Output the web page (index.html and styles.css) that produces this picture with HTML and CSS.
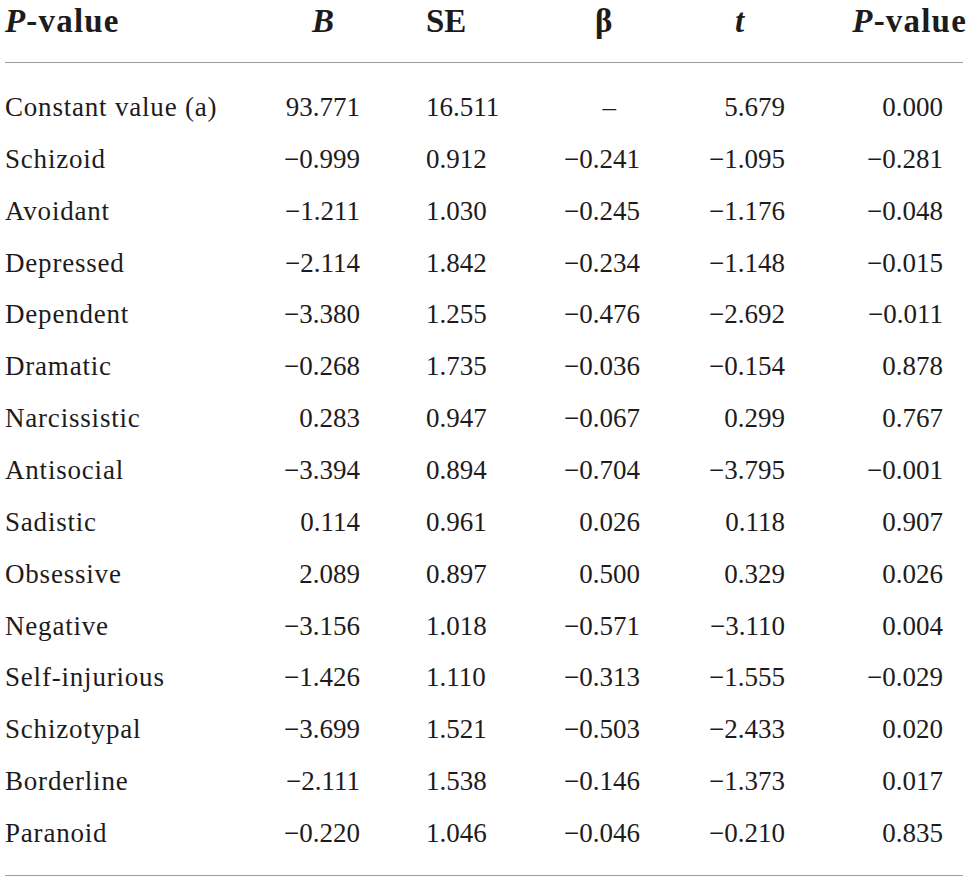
FILE: index.html
```html
<!DOCTYPE html>
<html lang="en">
<head>
<meta charset="utf-8">
<title>Regression table</title>
<link rel="stylesheet" href="styles.css">
</head>
<body>
<div class="table">
  <div class="head row">
    <div class="c1"><span class="pv"><i>P</i>-value</span></div>
    <div class="c2 h2"><i>B</i></div>
    <div class="c3">SE</div>
    <div class="c4 h4">β</div>
    <div class="c5 h5"><i>t</i></div>
    <div class="c6 h6"><span class="pv"><i>P</i>-value</span></div>
  </div>
  <div class="body">
    <div class="row"><div class="c1">Constant value (a)</div><div class="c2">93.771</div><div class="c3">16.511</div><div class="c4 dash">–</div><div class="c5">5.679</div><div class="c6">0.000</div></div>
    <div class="row"><div class="c1">Schizoid</div><div class="c2">−0.999</div><div class="c3">0.912</div><div class="c4">−0.241</div><div class="c5">−1.095</div><div class="c6">−0.281</div></div>
    <div class="row"><div class="c1">Avoidant</div><div class="c2">−1.211</div><div class="c3">1.030</div><div class="c4">−0.245</div><div class="c5">−1.176</div><div class="c6">−0.048</div></div>
    <div class="row"><div class="c1">Depressed</div><div class="c2">−2.114</div><div class="c3">1.842</div><div class="c4">−0.234</div><div class="c5">−1.148</div><div class="c6">−0.015</div></div>
    <div class="row"><div class="c1">Dependent</div><div class="c2">−3.380</div><div class="c3">1.255</div><div class="c4">−0.476</div><div class="c5">−2.692</div><div class="c6">−0.011</div></div>
    <div class="row"><div class="c1">Dramatic</div><div class="c2">−0.268</div><div class="c3">1.735</div><div class="c4">−0.036</div><div class="c5">−0.154</div><div class="c6">0.878</div></div>
    <div class="row"><div class="c1">Narcissistic</div><div class="c2">0.283</div><div class="c3">0.947</div><div class="c4">−0.067</div><div class="c5">0.299</div><div class="c6">0.767</div></div>
    <div class="row"><div class="c1">Antisocial</div><div class="c2">−3.394</div><div class="c3">0.894</div><div class="c4">−0.704</div><div class="c5">−3.795</div><div class="c6">−0.001</div></div>
    <div class="row"><div class="c1">Sadistic</div><div class="c2">0.114</div><div class="c3">0.961</div><div class="c4">0.026</div><div class="c5">0.118</div><div class="c6">0.907</div></div>
    <div class="row"><div class="c1">Obsessive</div><div class="c2">2.089</div><div class="c3">0.897</div><div class="c4">0.500</div><div class="c5">0.329</div><div class="c6">0.026</div></div>
    <div class="row"><div class="c1">Negative</div><div class="c2">−3.156</div><div class="c3">1.018</div><div class="c4">−0.571</div><div class="c5">−3.110</div><div class="c6">0.004</div></div>
    <div class="row"><div class="c1">Self-injurious</div><div class="c2">−1.426</div><div class="c3">1.110</div><div class="c4">−0.313</div><div class="c5">−1.555</div><div class="c6">−0.029</div></div>
    <div class="row"><div class="c1">Schizotypal</div><div class="c2">−3.699</div><div class="c3">1.521</div><div class="c4">−0.503</div><div class="c5">−2.433</div><div class="c6">0.020</div></div>
    <div class="row"><div class="c1">Borderline</div><div class="c2">−2.111</div><div class="c3">1.538</div><div class="c4">−0.146</div><div class="c5">−1.373</div><div class="c6">0.017</div></div>
    <div class="row"><div class="c1">Paranoid</div><div class="c2">−0.220</div><div class="c3">1.046</div><div class="c4">−0.046</div><div class="c5">−0.210</div><div class="c6">0.835</div></div>
  </div>
</div>
</body>
</html>
```

FILE: styles.css
```css
html, body {
  margin: 0;
  padding: 0;
  background: #ffffff;
}

body {
  font-family: "Liberation Serif", "Times New Roman", serif;
  color: #1e1b1c;
}

.table {
  margin-left: 5px;
  width: 958px;
}

.row {
  display: grid;
  grid-template-columns: 265px 130px 120px 140px 140px 163px;
  white-space: nowrap;
}

.head {
  font-size: 33px;
  font-weight: bold;
  line-height: 40px;
  padding-top: 1px;
  padding-bottom: 21px;
  border-bottom: 1px solid #9d9d9d;
}

.pv {
  letter-spacing: 1.2px;
}

.body {
  font-size: 27px;
  line-height: 51.86px;
  padding-top: 19px;
  padding-bottom: 15px;
  border-bottom: 1px solid #9d9d9d;
}

.body .c1 {
  letter-spacing: 0.8px;
}

.c1 { text-align: left; }
.c2 { text-align: right; padding-right: 40px; }
.c3 { text-align: left; padding-left: 26px; }
.c4 { text-align: right; padding-right: 20px; }
.c5 { text-align: right; padding-right: 15px; }
.c6 { text-align: right; padding-right: 20px; }

.head .h2 { text-align: left; padding-left: 42px; padding-right: 0; }
.head .h4 { text-align: left; padding-left: 75px; padding-right: 0; }
.head .h5 { text-align: left; padding-left: 75px; padding-right: 0; }
.head .h6 { padding-right: 0; margin-right: -4px; }

.dash { padding-right: 44px; }
```
